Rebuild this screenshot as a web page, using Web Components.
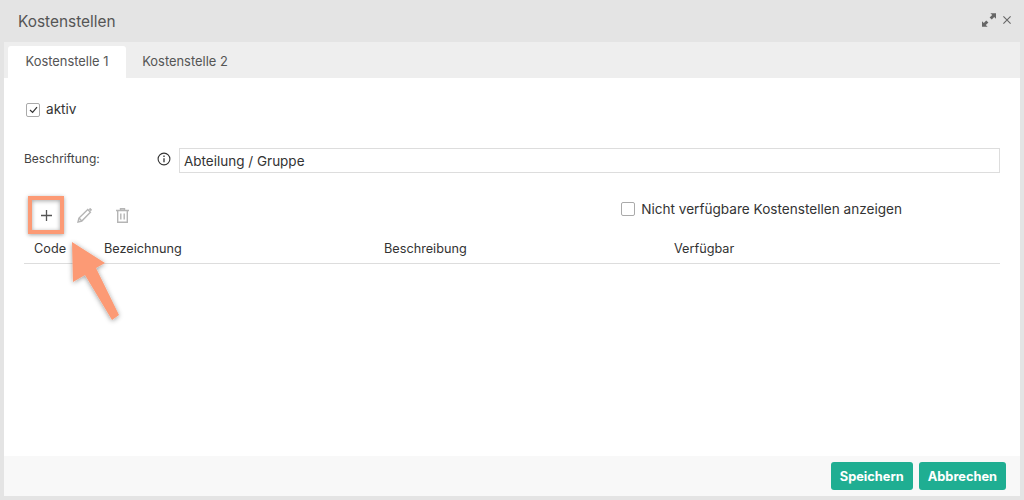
<!DOCTYPE html>
<html lang="de">
<head>
<meta charset="utf-8">
<title>Kostenstellen</title>
<style>
  html, body { margin: 0; height: 100%; }
  body { background: #e4e4e4; font-family: Inter, "Liberation Sans", sans-serif; color: #333; overflow: hidden; }
</style>
</head>
<body>
<cost-dialog heading="Kostenstellen">
  <tab-bar slot="tabs" active="Kostenstelle 1" other="Kostenstelle 2"></tab-bar>
  <check-field checked style="margin:0 0 30px 2px">aktiv</check-field>
  <label-row label="Beschriftung:" value="Abteilung / Gruppe"></label-row>
  <cost-toolbar></cost-toolbar>
  <cost-table></cost-table>
  <dialog-button slot="actions">Speichern</dialog-button>
  <dialog-button slot="actions">Abbrechen</dialog-button>
</cost-dialog>

<script>
class CostDialog extends HTMLElement {
  constructor() {
    super();
    this.attachShadow({ mode: 'open' });
    this.shadowRoot.innerHTML = `
    <style>
      :host { display: flex; flex-direction: column; width: 1024px; height: 500px; box-sizing: border-box; padding: 0 4px 4px; position: relative; }
      header { height: 42px; flex: none; display: flex; align-items: center; justify-content: space-between; margin: 0 -4px; padding: 0 13px 0 18px; box-sizing: border-box; }
      h1 { margin: 0; font-size: 15.4px; font-weight: 400; color: #555; }
      .win { display: flex; align-items: center; gap: 7px; margin-top: -3px; }
      svg { display: block; }
      main { flex: 1; background: #fff; display: flex; flex-direction: column; min-height: 0; }
      .body { flex: 1; padding: 22px 20px 0; min-height: 0; }
      footer { height: 40px; flex: none; background: #f8f8f8; display: flex; align-items: center; justify-content: flex-end; gap: 6px; padding-right: 14px; }
      .arrow { position: absolute; left: 60px; top: 230px; overflow: visible; }
    </style>
    <header>
      <h1></h1>
      <div class="win">
        <svg width="14" height="14" viewBox="0 0 14 14" fill="#666"><path d="M8.4 0.2H14V5.8L12.2 4L9.8 6.6L7.6 4.4L10.2 2Z"/><path d="M5.6 13.8H0V8.2L1.8 10L4.2 7.4L6.4 9.6L3.8 12Z"/></svg>
        <svg width="8" height="8" viewBox="0 0 8 8" stroke="#666" stroke-width="1.1" fill="none"><path d="M0.4 0.4L7.6 7.6M7.6 0.4L0.4 7.6"/></svg>
      </div>
    </header>
    <main>
      <slot name="tabs"></slot>
      <div class="body"><slot></slot></div>
      <footer><slot name="actions"></slot></footer>
    </main>
    <svg class="arrow" width="64" height="94" viewBox="60 230 64 94">
      <defs><filter id="sh" x="-30%" y="-30%" width="160%" height="160%"><feDropShadow dx="0" dy="1" stdDeviation="2.5" flood-color="#000" flood-opacity=".4"/></filter></defs>
      <path filter="url(#sh)" fill="#fc9a75" d="M72 242L105 263L96 268L119 315L112 320L85 275L73 282Z"/>
    </svg>`;
    this.shadowRoot.querySelector('h1').textContent = this.getAttribute('heading');
  }
}

class TabBar extends HTMLElement {
  constructor() {
    super();
    this.attachShadow({ mode: 'open' });
    this.shadowRoot.innerHTML = `
    <style>
      :host { display: flex; height: 36px; box-sizing: border-box; padding: 4px 0 0 4px; background: #eee; font-size: 12.9px; }
      div { display: flex; align-items: center; justify-content: center; width: 118px; border-radius: 3px 3px 0 0; color: #555; padding-bottom: 2px; box-sizing: border-box; }
      .on { background: #fff; }
    </style>
    <div class="on"></div>
    <div class="off"></div>`;
    this.shadowRoot.querySelector('.on').textContent = this.getAttribute('active');
    this.shadowRoot.querySelector('.off').textContent = this.getAttribute('other');
  }
}

class CheckField extends HTMLElement {
  constructor() {
    super();
    this.attachShadow({ mode: 'open' });
    const tick = this.hasAttribute('checked')
      ? '<svg width="9" height="8" viewBox="0 0 9 8" fill="none" stroke="#333" stroke-width="1.2"><path d="M1 4L3.6 6.4L8 1.2"/></svg>'
      : '';
    this.shadowRoot.innerHTML = `
    <style>
      :host { display: flex; align-items: center; gap: 6px; font-size: 13.6px; color: #333; height: 18px; }
      .box { width: 14px; height: 14px; margin-top: 1px; box-sizing: border-box; border: 1.5px solid #aaa; border-radius: 2px; display: flex; align-items: center; justify-content: center; background: #fff; }
    </style>
    <span class="box">${tick}</span><span><slot></slot></span>`;
  }
}

class LabelRow extends HTMLElement {
  constructor() {
    super();
    this.attachShadow({ mode: 'open' });
    this.shadowRoot.innerHTML = `
    <style>
      :host { display: flex; align-items: center; height: 25px; }
      label { width: 133px; font-size: 12px; color: #444; margin-top: -4px; }
      svg { margin-right: 8px; margin-top: -3px; display: block; }
      .input { flex: 1; height: 25px; box-sizing: border-box; border: 1px solid #ddd; padding: 0 4px; font-size: 13.5px; line-height: 24px; color: #333; }
    </style>
    <label></label>
    <svg width="14" height="14" viewBox="0 0 14 14" fill="none" stroke="#333"><circle cx="7" cy="7" r="5.9" stroke-width="1.1"/><path d="M7 6.3V10.2" stroke-width="1.3"/><path d="M7 3.6V5" stroke-width="1.3"/></svg>
    <div class="input"></div>`;
    this.shadowRoot.querySelector('label').textContent = this.getAttribute('label');
    this.shadowRoot.querySelector('.input').textContent = this.getAttribute('value');
  }
}

class CostToolbar extends HTMLElement {
  constructor() {
    super();
    this.attachShadow({ mode: 'open' });
    this.shadowRoot.innerHTML = `
    <style>
      :host { display: flex; align-items: center; height: 38px; margin-top: 23px; margin-left: 4px; position: relative; }
      .tool { width: 36px; height: 38px; box-sizing: border-box; display: flex; align-items: center; justify-content: center; margin-right: 2px; }
      .mark { border: 4px solid #fc9a75; box-shadow: 0 1px 4px rgba(0,0,0,.35), inset 0 1px 4px rgba(0,0,0,.35); }
      svg { display: block; }
      check-field { margin-left: auto; margin-right: 98px; margin-top: -13px; }
    </style>
    <div class="tool mark"><svg width="11" height="11" viewBox="0 0 11 11" stroke="#555" stroke-width="1.3"><path d="M5.5 0V11M0 5.5H11"/></svg></div>
    <div class="tool"><svg width="15" height="15" viewBox="0 0 15 15" fill="none" stroke="#b5b5b5" stroke-width="1.4"><path d="M1 14L2 10L10.8 1.6L13.4 4.2L4.8 13Z"/><path d="M2 10L4.8 13"/><path d="M12.5 0.5L14.5 2.6" stroke-width="2"/></svg></div>
    <div class="tool"><svg width="13" height="15" viewBox="0 0 13 15" fill="none" stroke="#b5b5b5" stroke-width="1.4"><path d="M0 2.5H13M4.5 2.5V0.8H8.5V2.5"/><path d="M1.7 2.5V14.2H11.3V2.5"/><path d="M4.8 5.5V11.5M8.2 5.5V11.5"/></svg></div>
    <check-field>Nicht verfügbare Kostenstellen anzeigen</check-field>`;
  }
}

class CostTable extends HTMLElement {
  constructor() {
    super();
    this.attachShadow({ mode: 'open' });
    this.shadowRoot.innerHTML = `
    <style>
      :host { display: grid; grid-template-columns: 70px 280px 290px 1fr; height: 30px; align-items: center; border-bottom: 1px solid #ddd; box-sizing: border-box; font-size: 12.7px; color: #333; padding-left: 10px; }
    </style>
    <span>Code</span><span>Bezeichnung</span><span>Beschreibung</span><span>Verfügbar</span>`;
  }
}

class DialogButton extends HTMLElement {
  constructor() {
    super();
    this.attachShadow({ mode: 'open' });
    this.shadowRoot.innerHTML = `
    <style>
      :host { display: flex; align-items: center; justify-content: center; height: 28px; padding: 0 9px; background: #1fae92; color: #fff; font-size: 12.8px; font-weight: 700; border-radius: 3px; }
    </style>
    <slot></slot>`;
  }
}

customElements.define('check-field', CheckField);
customElements.define('cost-dialog', CostDialog);
customElements.define('tab-bar', TabBar);
customElements.define('label-row', LabelRow);
customElements.define('cost-toolbar', CostToolbar);
customElements.define('cost-table', CostTable);
customElements.define('dialog-button', DialogButton);
</script>
</body>
</html>
